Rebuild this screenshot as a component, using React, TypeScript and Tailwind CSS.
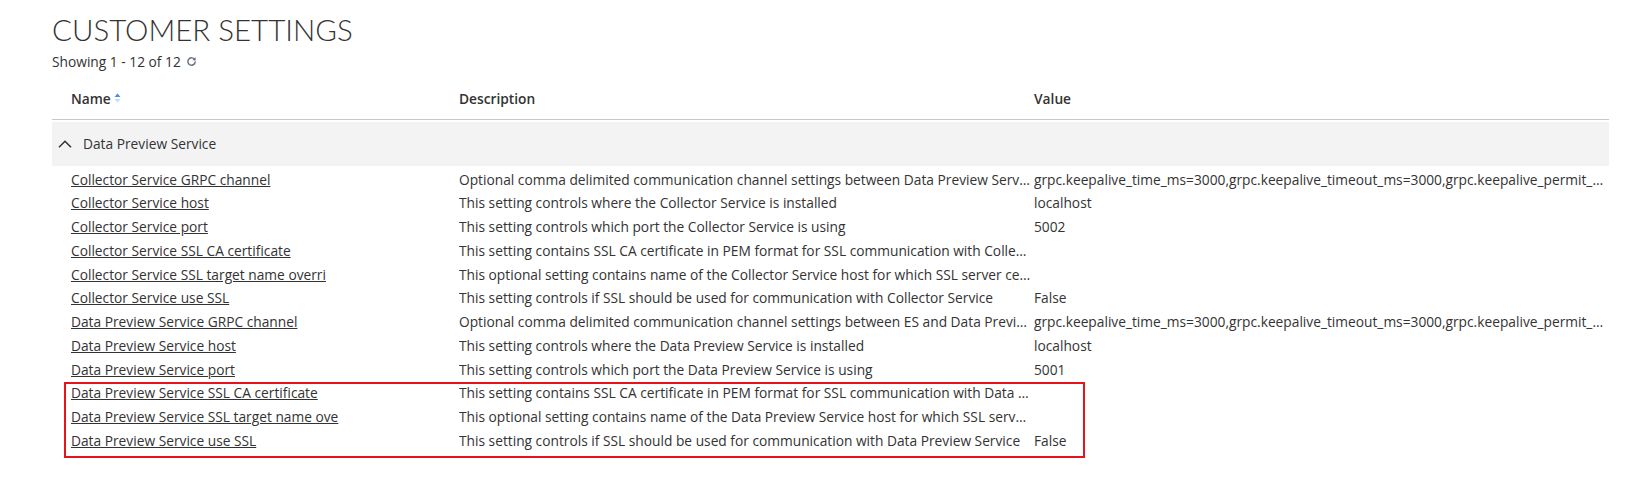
const GRPC = 'grpc.keepalive_time_ms=3000,grpc.keepalive_timeout_ms=3000,grpc.keepalive_permit_without_calls=1'

const rows = [
  { name: 'Collector Service GRPC channel', desc: 'Optional comma delimited communication channel settings between Data Preview Service and Collector Service', value: GRPC },
  { name: 'Collector Service host', desc: 'This setting controls where the Collector Service is installed', value: 'localhost' },
  { name: 'Collector Service port', desc: 'This setting controls which port the Collector Service is using', value: '5002' },
  { name: 'Collector Service SSL CA certificate', desc: 'This setting contains SSL CA certificate in PEM format for SSL communication with Collector Service', value: '' },
  { name: 'Collector Service SSL target name overri', desc: 'This optional setting contains name of the Collector Service host for which SSL server certificate is issued', value: '' },
  { name: 'Collector Service use SSL', desc: 'This setting controls if SSL should be used for communication with Collector Service', value: 'False' },
  { name: 'Data Preview Service GRPC channel', desc: 'Optional comma delimited communication channel settings between ES and Data Preview Service', value: GRPC },
  { name: 'Data Preview Service host', desc: 'This setting controls where the Data Preview Service is installed', value: 'localhost' },
  { name: 'Data Preview Service port', desc: 'This setting controls which port the Data Preview Service is using', value: '5001' },
  { name: 'Data Preview Service SSL CA certificate', desc: 'This setting contains SSL CA certificate in PEM format for SSL communication with Data Preview Service', value: '' },
  { name: 'Data Preview Service SSL target name ove', desc: 'This optional setting contains name of the Data Preview Service host for which SSL server certificate is issued', value: '' },
  { name: 'Data Preview Service use SSL', desc: 'This setting controls if SSL should be used for communication with Data Preview Service', value: 'False' },
]

function Row({ r }: { r: (typeof rows)[number] }) {
  return (
    <div className="flex items-center h-[23.75px]">
      <div className="w-[407px] pl-[19px] shrink-0">
        <a href="#" className="underline text-[#333]">{r.name}</a>
      </div>
      <div className="w-[575px] pr-[3px] shrink-0 truncate">{r.desc}</div>
      <div className="flex-1 min-w-0 truncate">{r.value}</div>
    </div>
  )
}

function SortIcon() {
  return (
    <svg width="7" height="10" viewBox="0 0 7 10" className="ml-[3px] -mt-[4px]">
      <path d="M3.5 0.5 L6.5 4 L0.5 4 Z" fill="#4a90d9" />
      <path d="M3.5 9.5 L6.5 6 L0.5 6 Z" fill="#c5dcf2" />
    </svg>
  )
}

function RefreshIcon() {
  return (
    <svg width="11" height="11" viewBox="0 0 12 12" fill="none" className="text-gray-500">
      <path d="M9.6 4.2 A4 4 0 1 0 10 6.6" stroke="currentColor" strokeWidth="1.6" strokeLinecap="round" />
      <path d="M10.4 1.2 L10.4 4.6 L7 4.6 Z" fill="currentColor" />
    </svg>
  )
}

export default function App() {
  return (
    <div
      className="bg-white min-h-screen pl-[52px] pr-[29px] pt-[12px] text-[13.75px] text-[#333]"
      style={{ fontFamily: '"Open Sans", sans-serif' }}
    >
      <h1
        className="text-[29.5px] leading-[36px] font-light text-[#333]"
        style={{ fontFamily: 'Lato, sans-serif' }}
      >
        CUSTOMER SETTINGS
      </h1>
      <div className="mt-[4px] leading-[19px] flex items-center gap-[5px]">
        <span>Showing 1 - 12 of 12</span>
        <RefreshIcon />
      </div>

      <div className="mt-[9px] h-[40px] flex items-center border-b border-[#c8c8c8] font-semibold">
        <div className="w-[407px] pl-[19px] shrink-0 flex items-center">
          Name
          <SortIcon />
        </div>
        <div className="w-[575px] shrink-0">Description</div>
        <div className="flex-1">Value</div>
      </div>

      <div className="mt-[2px] h-[44px] bg-[#f3f3f3] flex items-center pl-[6px] gap-[11px]">
        <svg width="14" height="8" viewBox="0 0 14 8" fill="none">
          <polyline points="1,7.3 7,1.3 13,7.3" stroke="#333" strokeWidth="1.5" />
        </svg>
        <span>Data Preview Service</span>
      </div>

      <div className="mt-[2px]">
        {rows.slice(0, 9).map((r) => (
          <Row key={r.name} r={r} />
        ))}
        <div className="relative">
          {rows.slice(9).map((r) => (
            <Row key={r.name} r={r} />
          ))}
          <div className="absolute left-[12px] w-[1021px] top-0 -bottom-[5px] border-2 border-[#e8141c] pointer-events-none" />
        </div>
      </div>
    </div>
  )
}
